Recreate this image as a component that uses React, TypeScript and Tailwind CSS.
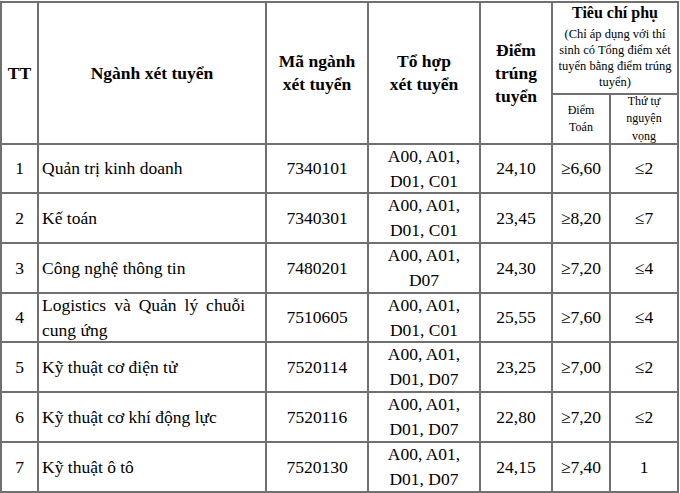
const rows = [
  { tt: "1", name: "Quản trị kinh doanh", code: "7340101", combo: ["A00, A01,", "D01, C01"], score: "24,10", math: "≥6,60", order: "≤2" },
  { tt: "2", name: "Kế toán", code: "7340301", combo: ["A00, A01,", "D01, C01"], score: "23,45", math: "≥8,20", order: "≤7" },
  { tt: "3", name: "Công nghệ thông tin", code: "7480201", combo: ["A00, A01,", "D07"], score: "24,30", math: "≥7,20", order: "≤4" },
  { tt: "4", name: "Logistics và Quản lý chuỗi cung ứng", code: "7510605", combo: ["A00, A01,", "D01, C01"], score: "25,55", math: "≥7,60", order: "≤4" },
  { tt: "5", name: "Kỹ thuật cơ điện tử", code: "7520114", combo: ["A00, A01,", "D01, D07"], score: "23,25", math: "≥7,00", order: "≤2" },
  { tt: "6", name: "Kỹ thuật cơ khí động lực", code: "7520116", combo: ["A00, A01,", "D01, D07"], score: "22,80", math: "≥7,20", order: "≤2" },
  { tt: "7", name: "Kỹ thuật ô tô", code: "7520130", combo: ["A00, A01,", "D01, D07"], score: "24,15", math: "≥7,40", order: "1" },
];

const cell = "border-r-2 border-b-2 border-[#707070] flex flex-col justify-center";

export default function App() {
  return (
    <div className="bg-white w-[680px] h-[493px] overflow-hidden pt-px text-black [font-family:'Liberation_Serif','Times_New_Roman',serif]">
      <div className="grid w-[679px] border-l-2 border-t-2 border-[#707070] grid-cols-[37px_228px_102px_112px_72px_58px_68px] grid-rows-[92px_50px_49px_50px_50px_49px_50px_50px_50px]">
        {/* header */}
        <div className={`${cell} row-span-2 items-center text-[17.5px] font-bold`}>TT</div>
        <div className={`${cell} row-span-2 items-center text-[17.5px] font-bold`}>Ngành xét tuyển</div>
        <div className={`${cell} row-span-2 items-center text-center text-[17.5px] font-bold leading-[23px]`}>
          <span>Mã ngành</span>
          <span>xét tuyển</span>
        </div>
        <div className={`${cell} row-span-2 items-center text-center text-[17.5px] font-bold leading-[23px]`}>
          <span>Tổ hợp</span>
          <span>xét tuyển</span>
        </div>
        <div className={`${cell} row-span-2 items-center text-center text-[17.5px] font-bold leading-[23px]`}>
          <span>Điểm</span>
          <span>trúng</span>
          <span>tuyển</span>
        </div>
        <div className="col-span-2 flex flex-col items-center text-center border-r-2 border-b-2 border-[#707070]">
          <span className="text-[16px] font-bold leading-[20px]">Tiêu chí phụ</span>
          <span className="mt-[3px] text-[12.5px] leading-[16px]">(Chỉ áp dụng với thí</span>
          <span className="text-[12.5px] leading-[16px]">sinh có Tổng điểm xét</span>
          <span className="text-[12.5px] leading-[16px]">tuyển bằng điểm trúng</span>
          <span className="text-[12.5px] leading-[16px]">tuyển)</span>
        </div>
        <div className={`${cell} items-center text-center text-[12px] leading-[17px]`}>
          <span>Điểm</span>
          <span>Toán</span>
        </div>
        <div className={`${cell} items-center text-center text-[12px] leading-[17.5px]`}>
          <span>Thứ tự</span>
          <span>nguyện</span>
          <span>vọng</span>
        </div>

        {/* body */}
        {rows.map((r) => (
          <Row key={r.tt} r={r} />
        ))}
      </div>
    </div>
  );
}

function Row({ r }: { r: (typeof rows)[number] }) {
  return (
    <>
      <div className={`${cell} items-center text-[17.5px]`}>{r.tt}</div>
      <div className={`${cell} pl-[3px] pr-[20px] text-[17.5px] leading-[25px]`}>
        <p className="text-justify">{r.name}</p>
      </div>
      <div className={`${cell} items-center text-[17.5px]`}>{r.code}</div>
      <div className={`${cell} items-center text-[17.5px] leading-[25px]`}>
        {r.combo.map((c) => (
          <span key={c}>{c}</span>
        ))}
      </div>
      <div className={`${cell} items-center text-[17.5px]`}>{r.score}</div>
      <div className={`${cell} items-center text-[17.5px]`}>{r.math}</div>
      <div className={`${cell} items-center text-[17.5px]`}>{r.order}</div>
    </>
  );
}
